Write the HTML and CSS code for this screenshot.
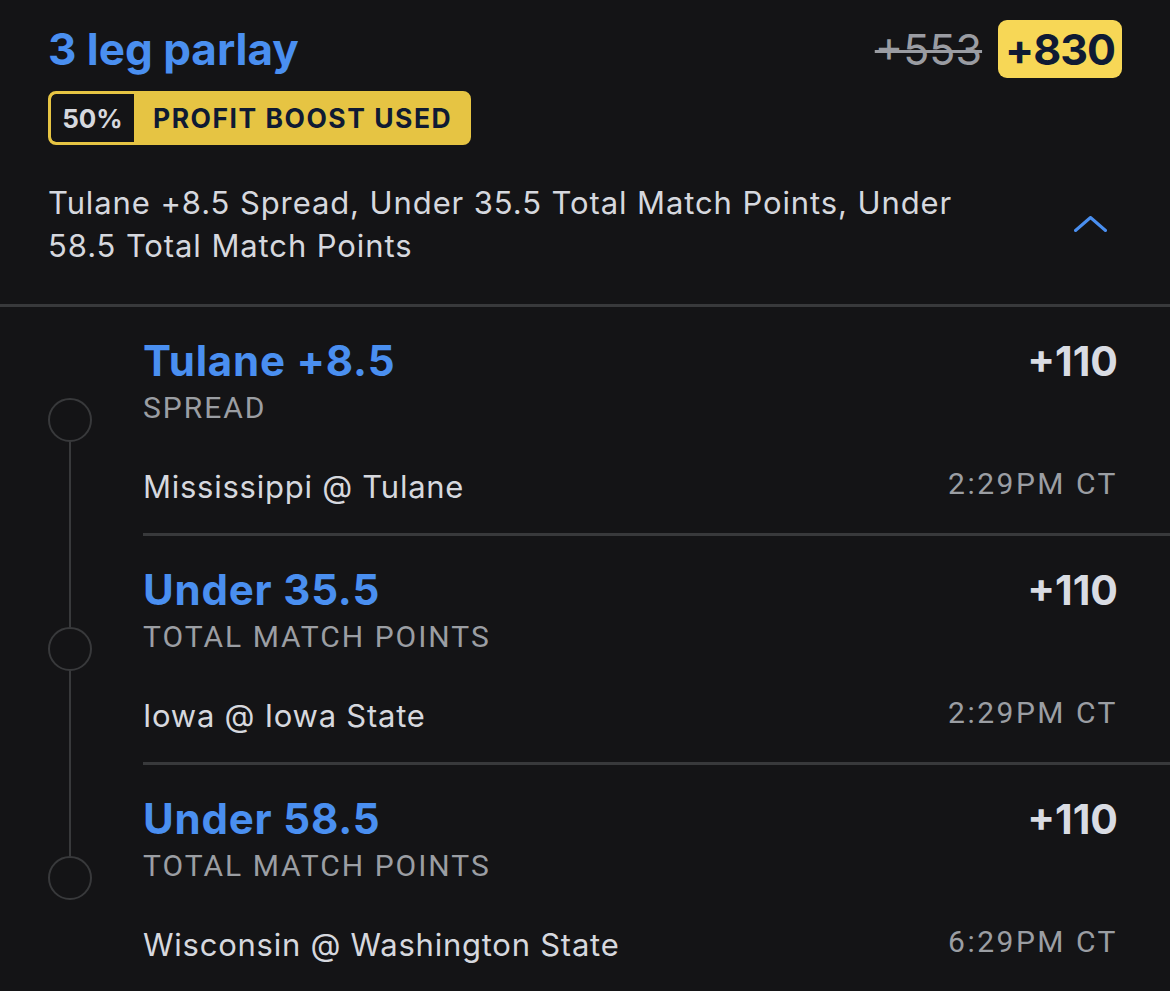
FILE: index.html
```html
<!DOCTYPE html>
<html lang="en">
<head>
<meta charset="utf-8">
<title>3 leg parlay</title>
<link rel="stylesheet" href="styles.css">
</head>
<body>
<div class="slip">
  <header class="head">
    <div class="head-top">
      <h1 class="title">3 leg parlay</h1>
      <div class="odds">
        <span class="odds-old">+553</span>
        <span class="odds-new">+830</span>
      </div>
    </div>
    <div class="boost">
      <span class="boost-pct">50%</span>
      <span class="boost-label">PROFIT BOOST USED</span>
    </div>
    <div class="summary">
      <p class="summary-text">Tulane +8.5 Spread, Under 35.5 Total Match Points, Under 58.5 Total Match Points</p>
      <svg class="chevron" width="33" height="16" viewBox="0 0 33 16" aria-hidden="true">
        <path d="M1.5 14.5 L16.5 1.5 L31.5 14.5" fill="none" stroke="#4a8ff0" stroke-width="3" stroke-linecap="round" stroke-linejoin="round"/>
      </svg>
    </div>
  </header>

  <div class="legs">
    <div class="leg leg-first">
      <div class="rail"><span class="seg seg-top"></span><span class="dot"></span><span class="seg seg-bottom"></span></div>
      <div class="leg-body">
        <div class="leg-row">
          <span class="pick">Tulane +8.5</span>
          <span class="price">+110</span>
        </div>
        <div class="market">SPREAD</div>
        <div class="leg-meta">
          <span class="game">Mississippi @ Tulane</span>
          <span class="time">2:29PM CT</span>
        </div>
      </div>
    </div>

    <div class="leg">
      <div class="rail"><span class="seg seg-top"></span><span class="dot"></span><span class="seg seg-bottom"></span></div>
      <div class="leg-body">
        <div class="leg-row">
          <span class="pick">Under 35.5</span>
          <span class="price">+110</span>
        </div>
        <div class="market">TOTAL MATCH POINTS</div>
        <div class="leg-meta">
          <span class="game">Iowa @ Iowa State</span>
          <span class="time">2:29PM CT</span>
        </div>
      </div>
    </div>

    <div class="leg leg-last">
      <div class="rail"><span class="seg seg-top"></span><span class="dot"></span><span class="seg seg-bottom"></span></div>
      <div class="leg-body">
        <div class="leg-row">
          <span class="pick">Under 58.5</span>
          <span class="price">+110</span>
        </div>
        <div class="market">TOTAL MATCH POINTS</div>
        <div class="leg-meta">
          <span class="game">Wisconsin @ Washington State</span>
          <span class="time">6:29PM CT</span>
        </div>
      </div>
    </div>
  </div>
</div>
</body>
</html>
```

FILE: styles.css
```css
* {
  box-sizing: border-box;
}

html, body {
  margin: 0;
  padding: 0;
  background: #141416;
}

body {
  font-family: "Inter", "Lato", sans-serif;
  color: #d6d8de;
  overflow: hidden;
}

.slip {
  width: 1170px;
  min-height: 991px;
  background: #141416;
}

/* ---------- header ---------- */
.head {
  padding: 20px 48px 37px 48px;
  border-bottom: 3px solid #38393b;
}

.head-top {
  display: flex;
  align-items: center;
  justify-content: space-between;
  height: 58px;
}

.title {
  margin: 0;
  font-size: 44px;
  line-height: 58px;
  font-weight: 700;
  color: #4a8ff0;
}

.odds {
  display: flex;
  align-items: center;
  gap: 16px;
}

.odds-old {
  font-size: 43px;
  line-height: 58px;
  font-weight: 400;
  color: #9a9ca2;
  text-decoration: line-through;
  text-decoration-thickness: 3px;
}

.odds-new {
  display: flex;
  align-items: center;
  height: 58px;
  padding: 0 7px;
  border-radius: 9px;
  background: #f7d756;
  color: #0f1a33;
  font-size: 43px;
  font-weight: 700;
  letter-spacing: -1px;
}

.boost {
  display: inline-flex;
  align-items: stretch;
  margin-top: 13px;
  height: 54px;
  border: 3px solid #e6c443;
  border-radius: 8px;
  background: #e6c443;
  overflow: hidden;
}

.boost-pct {
  display: flex;
  align-items: center;
  justify-content: center;
  width: 83px;
  background: #141416;
  border-radius: 5px 0 0 5px;
  color: #d6d8de;
  font-size: 26px;
  font-weight: 700;
}

.boost-label {
  display: flex;
  align-items: center;
  padding: 0 16px 0 19px;
  color: #0f1a33;
  font-size: 26.5px;
  font-weight: 700;
  letter-spacing: 1.5px;
}

.summary {
  display: flex;
  align-items: center;
  justify-content: space-between;
  margin-top: 36px;
}

.summary-text {
  margin: 0;
  max-width: 940px;
  font-size: 31px;
  line-height: 43px;
  letter-spacing: 0.9px;
  color: #d6d8de;
}

.chevron {
  flex: none;
  margin-right: 15px;
}

/* ---------- legs ---------- */
.leg {
  display: grid;
  grid-template-columns: 140px 1fr;
  column-gap: 3px;
  height: 229px;
}

.rail {
  display: flex;
  flex-direction: column;
  align-items: center;
}

.seg {
  width: 2px;
  background: #38393b;
}

.seg-top {
  height: 91px;
  flex: none;
}

.seg-bottom {
  flex: 1;
}

.leg-first .seg-top,
.leg-last .seg-bottom {
  background: transparent;
}

.dot {
  flex: none;
  width: 44px;
  height: 44px;
  border: 2px solid #38393b;
  border-radius: 50%;
}

.leg-body {
  padding: 29px 52px 0 0;
  border-bottom: 3px solid #38393b;
}

.leg-last .leg-body {
  border-bottom: none;
}

.leg-row {
  display: flex;
  justify-content: space-between;
  align-items: flex-start;
  height: 50px;
}

.pick {
  font-size: 42px;
  line-height: 50px;
  font-weight: 700;
  letter-spacing: 0.8px;
  color: #4a8ff0;
}

.price {
  font-size: 41px;
  line-height: 50px;
  font-weight: 700;
  color: #d9dce3;
}

.market {
  margin-top: 5px;
  font-family: "Roboto", "Noto Sans", sans-serif;
  font-size: 30px;
  line-height: 34px;
  font-weight: 400;
  letter-spacing: 2px;
  color: #9b9ea3;
}

.leg-meta {
  display: flex;
  justify-content: space-between;
  align-items: flex-start;
  margin-top: 42px;
}

.game {
  font-size: 31px;
  line-height: 40px;
  letter-spacing: 0.75px;
  color: #d6d8de;
}

.time {
  font-family: "Roboto", "Noto Sans", sans-serif;
  font-size: 30px;
  line-height: 34px;
  letter-spacing: 2.5px;
  color: #9b9ea3;
}
```
